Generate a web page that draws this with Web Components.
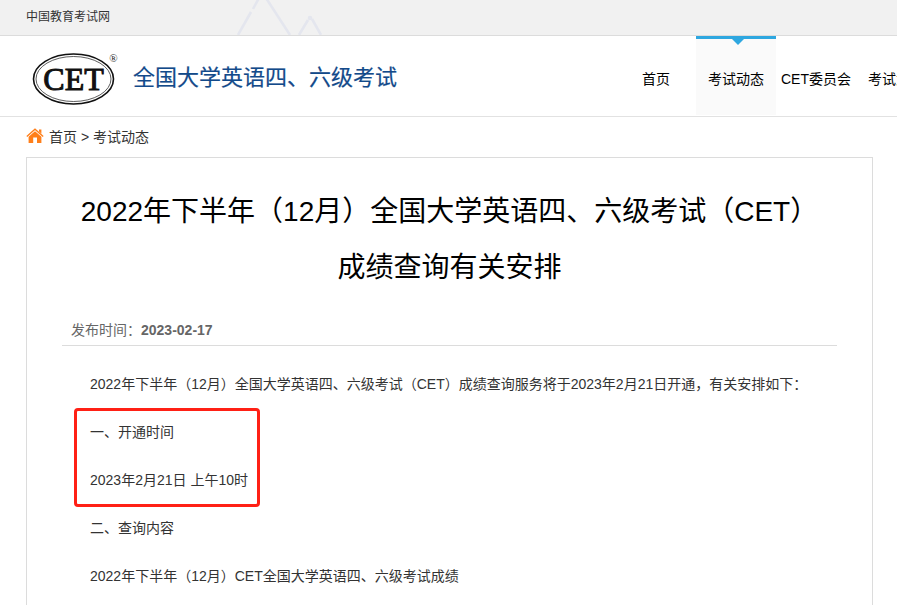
<!DOCTYPE html>
<html lang="zh-CN">
<head>
<meta charset="utf-8">
<meta name="viewport" content="width=device-width, initial-scale=1">
<title>全国大学英语四、六级考试</title>
<style>
body {
  margin: 0;
  background: #fff;
  color: #333;
  font: 14px/24px "Liberation Sans", "Noto Sans CJK SC", sans-serif;
  overflow: hidden;
}
</style>
</head>
<body>

<top-bar><a href="#">中国教育考试网</a></top-bar>

<site-header>
  <cet-logo slot="brand" name="全国大学英语四、六级考试"></cet-logo>
  <nav-item>首页</nav-item>
  <nav-item active>考试动态</nav-item>
  <nav-item>CET委员会</nav-item>
  <nav-item>考试大纲</nav-item>
</site-header>

<main>
  <bread-crumb current="考试动态">首页</bread-crumb>
  <news-article date="2023-02-17">
    <span slot="title">2022年下半年（12月）全国大学英语四、六级考试（CET）成绩查询有关安排</span>
    <text-line>2022年下半年（12月）全国大学英语四、六级考试（CET）成绩查询服务将于2023年2月21日开通，有关安排如下：</text-line>
    <marked-block>
      <text-line>一、开通时间</text-line>
      <text-line>2023年2月21日 上午10时</text-line>
    </marked-block>
    <text-line>二、查询内容</text-line>
    <text-line>2022年下半年（12月）CET全国大学英语四、六级考试成绩</text-line>
  </news-article>
</main>

<!-- grey strip on top -->
<template id="top-bar">
<style>
:host {
  display: block;
  height: 35px;
  padding-left: 26px;
  background: #f1f1f1;
  border-bottom: 1px solid #dcdcdc;
  font-size: 12px;
  line-height: 34px;
  position: relative;
}
::slotted(a) { color: #333; text-decoration: none; }
svg { position: absolute; left: 230px; top: 0; }
</style>
<slot></slot>
<svg width="100" height="35" viewBox="0 0 100 35" fill="none" stroke="#e4e6ee" stroke-width="2.6" aria-hidden="true">
  <path d="M8 35 21 12M23 9 29 -2M36 -2 60 35M69 35 78 20M82 19 91 35"/>
  <circle cx="80" cy="18" r="1"/>
</svg>
</template>

<!-- logo + menu -->
<template id="site-header">
<style>
:host {
  display: grid;
  grid-template-columns: 590px minmax(0, 1fr);
  height: 80px;
  padding-left: 26px;
  border-bottom: 1px solid #e2e2e2;
}
nav { display: flex; overflow: hidden; }
</style>
<slot name="brand"></slot>
<nav><slot></slot></nav>
</template>

<template id="nav-item">
<style>
:host { display: block; flex: 0 0 80px; height: 79px; }
a {
  display: block;
  height: 100%;
  color: #000;
  line-height: 86px;
  text-align: center;
  text-decoration: none;
  white-space: nowrap;
  position: relative;
}
:host([active]) a { background: #fafafa; }
:host([active]) a::before {
  content: "";
  position: absolute;
  left: 0;
  right: 0;
  top: 0;
  height: 3px;
  background: #2ea7e0;
}
:host([active]) a::after {
  content: "";
  position: absolute;
  left: 36px;
  top: 3px;
  border: 6px solid transparent;
  border-top-color: #2ea7e0;
  border-bottom: 0;
}
</style>
<a href="#"><slot></slot></a>
</template>

<template id="cet-logo">
<style>
:host { display: flex; align-items: center; gap: 14px; padding: 4px 0 0 6px; }
.name { color: #134a8a; font-size: 22px; line-height: 32px; -webkit-text-stroke: 0.2px #134a8a; }
svg { flex: none; }
</style>
<svg width="87" height="56" viewBox="0 0 87 56" role="img" aria-label="CET">
  <ellipse cx="41.5" cy="29" rx="40" ry="25" fill="#fff" stroke="#111" stroke-width="1.6"/>
  <ellipse cx="41.5" cy="29" rx="37.5" ry="22.5" fill="none" stroke="#333" stroke-width=".8"/>
  <text x="41.5" y="39.5" text-anchor="middle" font-family="Liberation Serif, serif" font-size="32" fill="#111" stroke="#111" stroke-width="1">CET</text>
  <text x="81.5" y="12" text-anchor="middle" font-family="Liberation Serif, serif" font-size="11" fill="#222">®</text>
</svg>
<span class="name"></span>
</template>

<template id="bread-crumb">
<style>
:host { display: flex; align-items: center; height: 40px; padding-left: 26px; }
svg { margin-right: 5px; }
a { color: #333; text-decoration: none; }
nav { white-space: pre; }
</style>
<svg width="18" height="18" viewBox="0 0 18 18" aria-hidden="true">
  <path d="M0.8 8.4 9 1.2l8.2 7.2" fill="none" stroke="#ff7f1a" stroke-width="1.3"/>
  <path d="M13 1.5h2.4v4.2L13 3.6z" fill="#ff7f1a"/>
  <path d="M2.6 8.8 9 3.2l6.4 5.6V15H11V9.6H7.2V15H2.6z" fill="#ff7f1a"/>
</svg>
<nav><a href="#"><slot></slot></a> &gt; <a href="#" class="current"></a></nav>
</template>

<template id="news-article">
<style>
:host {
  display: block;
  margin: 0 24px 0 26px;
  padding: 26px 35px 8px;
  border: 1px solid #dcdcdc;
}
h1 {
  margin: 0;
  padding: 0 10px;
  color: #000;
  font-size: 28px;
  font-weight: 400;
  line-height: 56px;
  text-align: center;
}
.info {
  margin: 20px 0 14px;
  padding: 0 9px;
  border-bottom: 1px solid #dcdcdc;
  color: #666;
  line-height: 29px;
}
</style>
<article>
  <h1><slot name="title"></slot></h1>
  <div class="info">发布时间：<b></b></div>
  <slot></slot>
</article>
</template>

<template id="text-line">
<style>
:host { display: block; line-height: 48px; }
p { margin: 0; text-indent: 2em; }
</style>
<p><slot></slot></p>
</template>

<!-- red frame around the opening time -->
<template id="marked-block">
<style>
:host { display: block; width: fit-content; position: relative; }
:host::after {
  content: "";
  position: absolute;
  inset: 0 -12px -3px 12px;
  border: 3px solid #ff2015;
  border-radius: 4px;
}
</style>
<slot></slot>
</template>

<script>
class BaseElement extends HTMLElement {
  constructor() {
    super();
    this.attachShadow({ mode: "open" });
    const template = document.getElementById(this.localName);
    this.shadowRoot.appendChild(template.content.cloneNode(true));
  }

  // copy an attribute's value into the shadow tree
  fill(selector, attribute) {
    this.shadowRoot.querySelector(selector).textContent = this.getAttribute(attribute) || "";
  }
}

class TopBar extends BaseElement {}
class SiteHeader extends BaseElement {}
class NavItem extends BaseElement {}
class TextLine extends BaseElement {}
class MarkedBlock extends BaseElement {}

class CetLogo extends BaseElement {
  connectedCallback() {
    this.fill(".name", "name");
  }
}

class BreadCrumb extends BaseElement {
  connectedCallback() {
    this.fill(".current", "current");
  }
}

class NewsArticle extends BaseElement {
  connectedCallback() {
    this.fill("b", "date");
  }
}

customElements.define("top-bar", TopBar);
customElements.define("site-header", SiteHeader);
customElements.define("nav-item", NavItem);
customElements.define("cet-logo", CetLogo);
customElements.define("bread-crumb", BreadCrumb);
customElements.define("news-article", NewsArticle);
customElements.define("text-line", TextLine);
customElements.define("marked-block", MarkedBlock);
</script>
</body>
</html>
